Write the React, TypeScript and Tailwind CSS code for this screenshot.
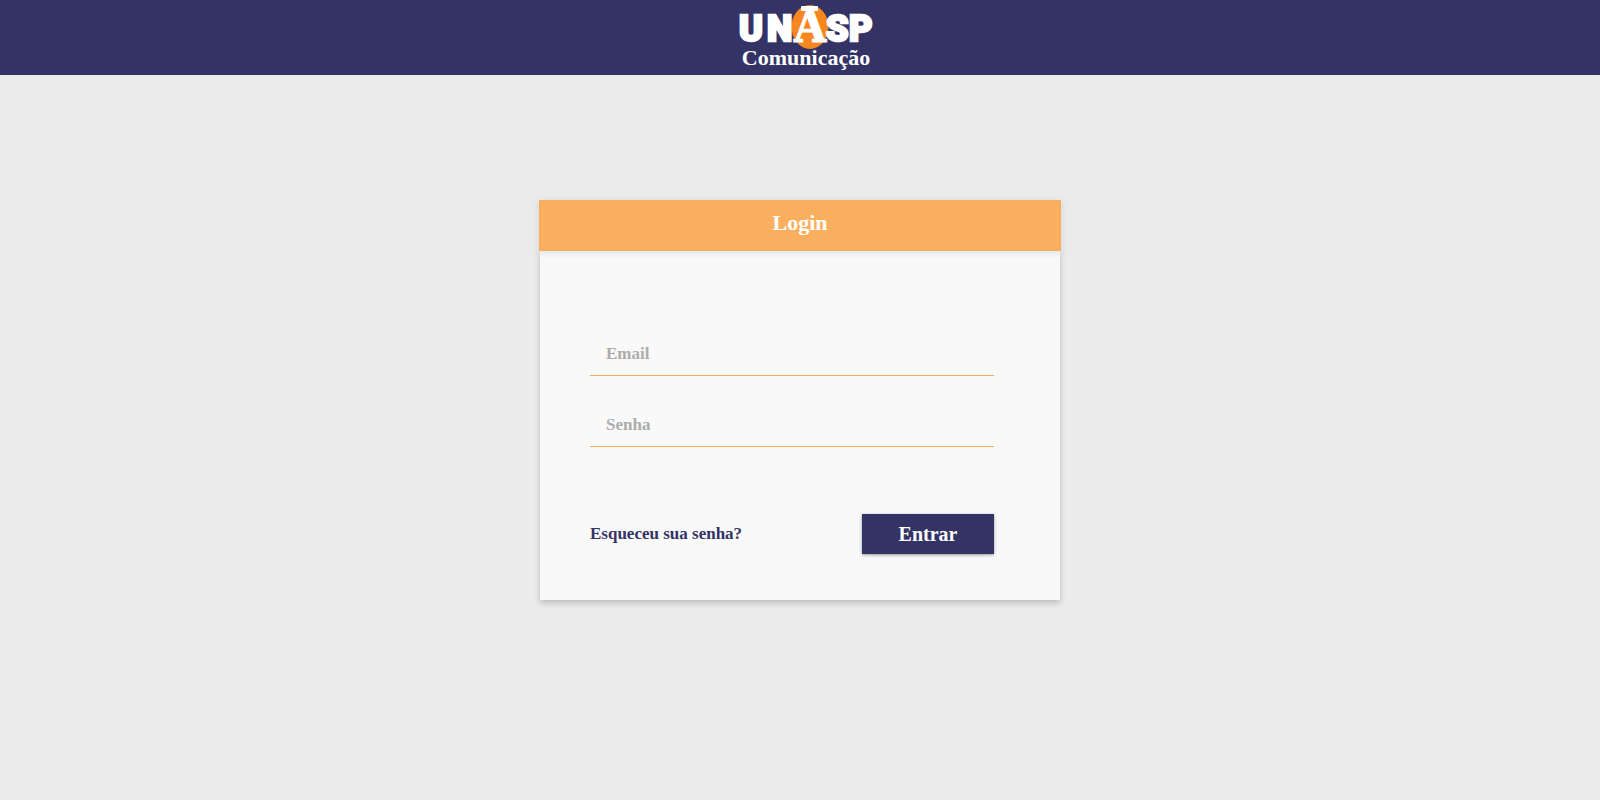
function Logo() {
  return (
    <svg width="134" height="46" viewBox="0 0 134 46" role="img" aria-label="UNASP" className="block overflow-visible">
      <ellipse cx="71" cy="23" rx="18.500" ry="22" fill="#f6861f" />
      <g fill="#fff" stroke="#fff" strokeWidth="2.500" className="font-[Roboto,sans-serif] text-[36px] font-black">
        <text x="0" y="37">U</text>
        <text x="28" y="37">N</text>
        <text x="87" y="37">S</text>
        <text x="110" y="37">P</text>
      </g>
      <rect x="62" y="2" width="17" height="5" rx="1" fill="#fff" />
      <text
        x="71"
        y="38"
        textAnchor="middle"
        fill="#fff"
        stroke="#fff"
        strokeWidth="1"
        className="font-['DejaVu_Serif_Condensed','DejaVu_Serif',serif] text-[46px] font-bold"
      >
        A
      </text>
    </svg>
  );
}

export default function App() {
  return (
    <div className="min-h-screen bg-[#ebebeb] font-['Liberation_Serif',serif] font-bold">
      <header className="flex flex-col items-center bg-[#343365] pt-1 pb-[5px] pl-3 text-white">
        <Logo />
        <p className="-mt-1 text-[22px] leading-6">Comunicação</p>
      </header>
      <main className="flex justify-center pt-[125px]">
        <section className="w-full max-w-[522px]">
          <h1 className="relative flex h-[51px] items-center justify-center bg-[#faaf5f] pb-1.5 text-[22px] text-white shadow-[0_2px_8px_rgba(0,0,0,0.1)]">
            Login
          </h1>
          <form
            className="mx-px bg-[#f9f9f9] pt-[84px] pr-[66px] pb-[46px] pl-[50px] shadow-[0_3px_6px_rgba(0,0,0,0.2)]"
            onSubmit={(e) => e.preventDefault()}
          >
            <input
              type="email"
              aria-label="Email"
              placeholder="Email"
              className="block h-[41px] w-full border-b border-[#fbab55] px-4 pb-0.5 text-[17px] outline-none placeholder:text-[#adadad]"
            />
            <input
              type="password"
              aria-label="Senha"
              placeholder="Senha"
              className="mt-[30px] block h-[41px] w-full border-b border-[#fbab55] px-4 pb-0.5 text-[17px] outline-none placeholder:text-[#adadad]"
            />
            <div className="mt-[67px] flex items-center justify-between">
              <a href="#senha" className="text-[17px] text-[#343365]">
                Esqueceu sua senha?
              </a>
              <button type="submit" className="h-10 w-[132px] bg-[#343365] text-[20px] text-white shadow-[0_1px_3px_rgba(0,0,0,0.4)]">
                Entrar
              </button>
            </div>
          </form>
        </section>
      </main>
    </div>
  );
}
